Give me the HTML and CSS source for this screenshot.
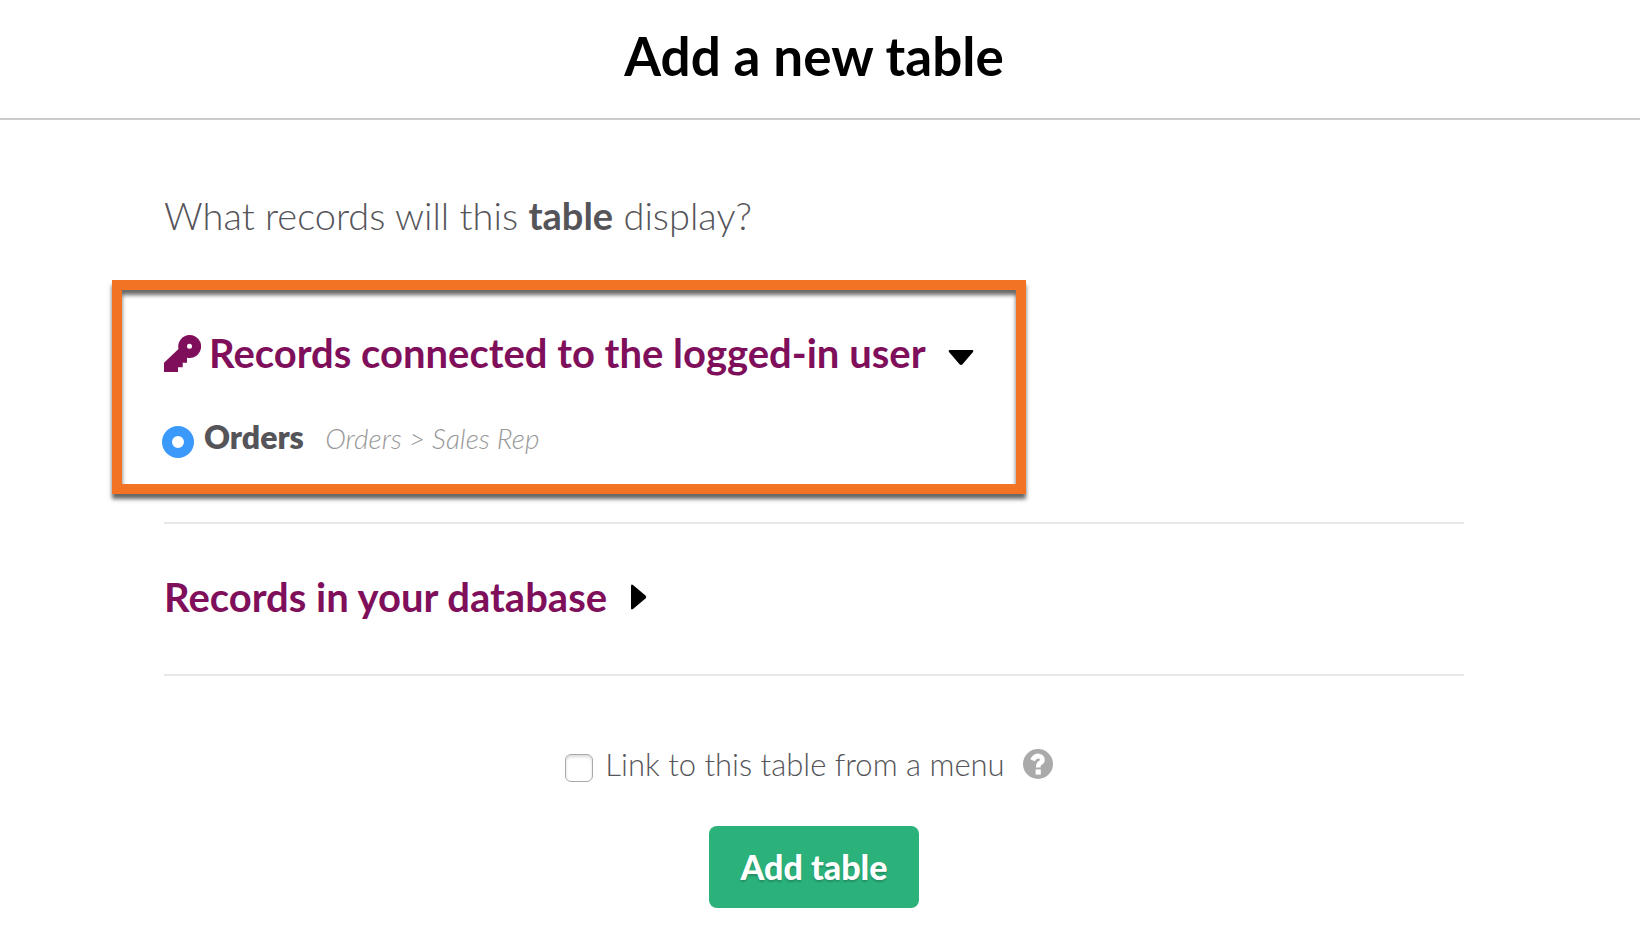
FILE: index.html
```html
<!DOCTYPE html>
<html lang="en">
<head>
    <meta charset="UTF-8">
    <meta name="viewport" content="width=device-width, initial-scale=1.0">
    <title>Add a new table</title>
    <link rel="stylesheet" href="styles.css">
</head>
<body>
    <header class="header">
        <h1>Add a new table</h1>
    </header>
    <form class="container">
        <p class="question">What records will this <strong>table</strong> display?</p>

        <section class="highlight">
            <h2>
                <button type="button" class="toggle" aria-expanded="true">
                    <svg class="key" viewBox="0 0 37 37" aria-hidden="true">
                        <path fill-rule="evenodd" d="M25.500 0a11.500 11.500 0 1 1-2.500 22.700V27.700H18.700V32.300H14V37H0V27.700L14.500 14A11.500 11.500 0 0 1 25.500 0zM25.500 8.800a2.500 2.500 0 1 0 0 5a2.500 2.500 0 1 0 0-5z"/>
                    </svg>
                    <span>Records connected to the logged-in user</span>
                    <svg class="caret" viewBox="0 0 26 26" aria-hidden="true">
                        <path d="M1.500 10H24.500Q26 10.500 25 12L14.500 24.200Q13 25.600 11.500 24.200L1 12Q0 10.500 1.500 10z"/>
                    </svg>
                </button>
            </h2>
            <div class="option">
                <input type="radio" id="orders" name="source" checked>
                <label for="orders">Orders <em>Orders &gt; Sales Rep</em></label>
            </div>
        </section>

        <section class="group">
            <h2>
                <button type="button" class="toggle" aria-expanded="false">
                    <span>Records in your database</span>
                    <svg class="caret" viewBox="0 0 26 26" aria-hidden="true">
                        <path d="M2 1.500Q2.500 0 4 1L16.500 11.500Q18 13 16.500 14.500L4 25Q2.500 26 2 24.500z"/>
                    </svg>
                </button>
            </h2>
        </section>

        <div class="menu-link">
            <input type="checkbox" id="menuLink">
            <label for="menuLink">Link to this table from a menu</label>
            <svg class="help" viewBox="0 0 30 30" role="img" aria-label="Help">
                <circle cx="15" cy="15" r="15" fill="#aaa"/>
                <path d="M9.500 11.300Q11.500 7 15.500 7Q19.400 7.600 19.400 11Q19 13.300 16.700 14.400Q15.200 15.300 15.200 18.500" fill="none" stroke="#fff" stroke-width="4.800"/>
                <rect x="12.600" y="20.400" width="5.200" height="5.200" fill="#fff"/>
            </svg>
        </div>

        <button type="submit" class="submit">Add table</button>
    </form>
</body>
</html>
```
FILE: styles.css
```css
* {
    box-sizing: border-box;
}
body {
    margin: 0;
    font-family: Lato, sans-serif;
    font-size: 31px;
    line-height: 40px;
    font-weight: 300;
    color: #555459;
    background: #fff;
}
.header {
    padding: 24px 12px 30px 0;
    border-bottom: 2px solid #ccc;
    text-align: center;
}
h1 {
    margin: 0;
    font-size: 53px;
    line-height: 64px;
    font-weight: 700;
    color: #000;
}
.container {
    display: flex;
    flex-direction: column;
    align-items: center;
    padding: 71px 176px 32px 164px;
}
.question {
    align-self: stretch;
    margin: 0 0 41px;
    font-size: 38px;
    line-height: 48px;
}
strong {
    font-weight: 700;
}
.highlight {
    align-self: flex-start;
    margin: 0 0 28px -52px;
    padding: 39px 42px 26px;
    border: 10px solid #f27324;
    box-shadow: 0 5px 4px rgba(0, 0, 0, 0.6), inset 0 5px 4px rgba(0, 0, 0, 0.6);
}
h2 {
    margin: 0;
    font-size: 40px;
    line-height: 48px;
}
.toggle {
    display: flex;
    align-items: center;
    padding: 0;
    border: none;
    background: none;
    font: inherit;
    font-weight: 700;
    color: #7f0f5b;
    cursor: pointer;
}
.key {
    width: 37px;
    height: 37px;
    margin-right: 8px;
    fill: #7f0f5b;
}
.caret {
    width: 26px;
    height: 26px;
    margin-left: 22px;
    fill: #000;
}
input {
    flex: none;
    appearance: none;
    margin: 0;
    background: #fff;
}
.option {
    display: flex;
    align-items: center;
    gap: 10px;
    margin: 39px 0 0 -2px;
}
.option input {
    width: 32px;
    height: 32px;
    margin-top: 10px;
    border: 10px solid #3b99fc;
    border-radius: 50%;
}
.option label {
    font-size: 32px;
    font-weight: 800;
}
.option em {
    margin-left: 14px;
    font-size: 28px;
    font-weight: 300;
    color: #999;
}
.group {
    align-self: stretch;
    padding: 49px 0 53px;
    border: solid #e8e8e8;
    border-width: 2px 0;
}
.menu-link {
    display: flex;
    align-items: center;
    margin: 68px 10px 42px 0;
}
.menu-link input {
    width: 28px;
    height: 28px;
    margin: 8px 12px 0 0;
    border: 1px solid #aaa;
    border-radius: 6px;
    box-shadow: inset 0 2px 3px rgba(0, 0, 0, 0.15);
}
.help {
    width: 30px;
    height: 30px;
    margin-left: 18px;
}
.submit {
    padding: 21px 32px;
    border: none;
    border-radius: 8px;
    background: #2bb27b;
    color: #fff;
    font-family: inherit;
    font-size: 34px;
    line-height: 40px;
    font-weight: 900;
    text-shadow: 0 2px 2px rgba(0, 0, 0, 0.2);
    cursor: pointer;
}
```
